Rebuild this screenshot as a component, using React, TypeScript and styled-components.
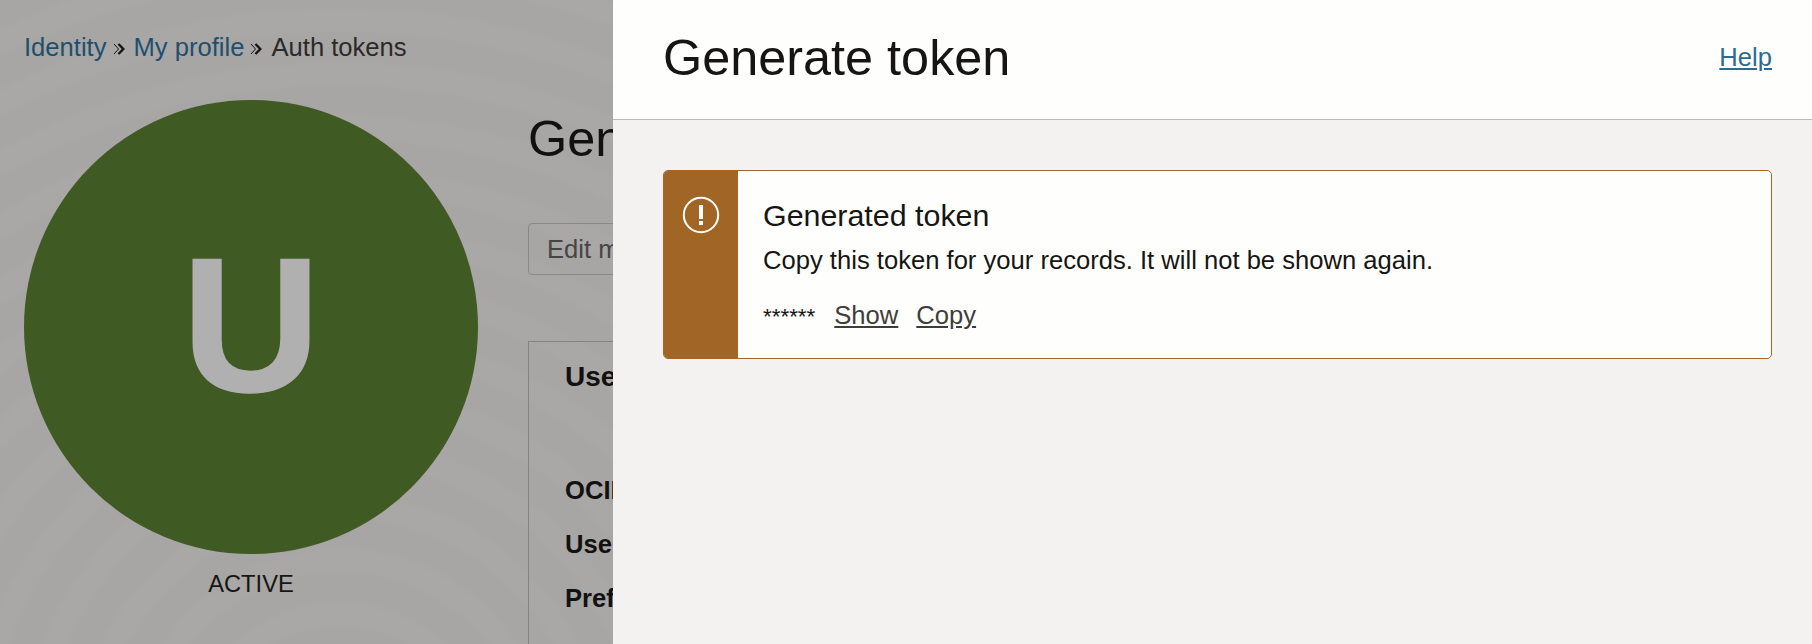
import styled, { createGlobalStyle } from 'styled-components';

const GlobalStyle = createGlobalStyle`
  html, body {
    margin: 0;
    height: 100%;
    overflow: hidden;
    font-family: "Liberation Sans", Arial, sans-serif;
    color: #161513;
  }
`;

const profileRows = ['OCID', 'User name', 'Preferred language'];

const CrumbChevrons = () => (
  <CrumbSep width="12" height="12" viewBox="0 0 12 12" fill="none" stroke="#161513">
    <path d="M1 1 L5.5 6 L1 11" strokeWidth="1" />
    <path d="M5.5 1 L10.3 6 L5.5 11" strokeWidth="2.4" />
  </CrumbSep>
);

export default function App() {
  return (
    <>
      <GlobalStyle />
      <Page>
        <Breadcrumbs>
          <CrumbLink>Identity</CrumbLink>
          <CrumbChevrons />
          <CrumbLink>My profile</CrumbLink>
          <CrumbChevrons />
          <CrumbCurrent>Auth tokens</CrumbCurrent>
        </Breadcrumbs>
        <Columns>
          <AvatarColumn>
            <Avatar>
              <AvatarLetter>U</AvatarLetter>
            </Avatar>
            <AvatarStatus>ACTIVE</AvatarStatus>
          </AvatarColumn>
          <Content>
            <PageTitle>Generate token</PageTitle>
            <EditButton>Edit my profile</EditButton>
            <InfoCard>
              <InfoTitle>User information</InfoTitle>
              <InfoRows>
                {profileRows.map((row) => (
                  <InfoRow key={row}>{row}</InfoRow>
                ))}
              </InfoRows>
            </InfoCard>
          </Content>
        </Columns>
      </Page>
      <Panel>
        <PanelHeader>
          <PanelTitle>Generate token</PanelTitle>
          <HelpLink>Help</HelpLink>
        </PanelHeader>
        <PanelBody>
          <Alert>
            <AlertStrip>
              <svg width="38" height="38" viewBox="0 0 38 38" fill="none">
                <circle cx="19" cy="19" r="17.2" stroke="#fff" strokeWidth="2" />
                <rect x="17" y="9" width="4" height="14" fill="#fff" />
                <rect x="17" y="25" width="4" height="4" fill="#fff" />
              </svg>
            </AlertStrip>
            <AlertContent>
              <AlertTitle>Generated token</AlertTitle>
              <AlertText>Copy this token for your records. It will not be shown again.</AlertText>
              <TokenRow>
                <TokenMask>******</TokenMask>
                <TokenAction>Show</TokenAction>
                <TokenAction>Copy</TokenAction>
              </TokenRow>
            </AlertContent>
          </Alert>
        </PanelBody>
      </Panel>
    </>
  );
}

const Page = styled.div`
  width: 1812px;
  height: 644px;
  box-sizing: border-box;
  padding: 32px 0 0 24px;
  overflow: hidden;
  background:
    repeating-radial-gradient(circle at 340px 760px, rgba(0, 0, 0, 0.006) 0 22px, rgba(255, 255, 255, 0.006) 30px 46px, rgba(0, 0, 0, 0.006) 54px),
    #a8a7a6;
  white-space: nowrap;
`;

const Breadcrumbs = styled.div`
  display: flex;
  align-items: center;
  height: 30px;
  font-size: 25.6px;
  color: #2b2a28;
`;

const CrumbLink = styled.span`
  color: #1f4f6d;
`;

const CrumbSep = styled.svg`
  flex-shrink: 0;
  margin: 3px 9px 0 6px;
`;

const CrumbCurrent = styled.span``;

const Columns = styled.div`
  display: flex;
  margin-top: 38px;
`;

const AvatarColumn = styled.div`
  display: flex;
  flex-direction: column;
  align-items: center;
  width: 454px;
  flex-shrink: 0;
`;

const Avatar = styled.div`
  display: flex;
  align-items: center;
  justify-content: center;
  width: 454px;
  height: 454px;
  border-radius: 50%;
  background: #405a24;
`;

const AvatarLetter = styled.span`
  margin-top: -5px;
  color: #b0b0b0;
  font-size: 192px;
  font-weight: 700;
  -webkit-text-stroke: 1.5px #b0b0b0;
`;

const AvatarStatus = styled.div`
  margin-top: 15px;
  font-size: 23.7px;
  line-height: 30px;
  color: #161513;
`;

const Content = styled.div`
  margin-left: 50px;
`;

const PageTitle = styled.h1`
  margin: 9px 0 0;
  font-size: 50.4px;
  font-weight: 400;
  line-height: 60px;
  color: #121110;
`;

const EditButton = styled.div`
  display: flex;
  align-items: center;
  box-sizing: border-box;
  width: 200px;
  height: 52px;
  margin-top: 54px;
  padding: 0 18px;
  border: 1px solid #8a8988;
  border-radius: 4px;
  font-size: 25.6px;
  color: #474543;
`;

const InfoCard = styled.div`
  width: 900px;
  height: 400px;
  box-sizing: border-box;
  margin-top: 66px;
  padding: 19px 36px;
  border: 1px solid #858483;
`;

const InfoTitle = styled.div`
  font-size: 28px;
  font-weight: 700;
  line-height: 32px;
  color: #121110;
`;

const InfoRows = styled.div`
  display: flex;
  flex-direction: column;
  gap: 24px;
  margin-top: 82px;
`;

const InfoRow = styled.div`
  font-size: 25.6px;
  font-weight: 700;
  line-height: 30px;
  color: #121110;
`;

const Panel = styled.div`
  position: fixed;
  top: 0;
  right: 0;
  bottom: 0;
  width: 1199px;
  display: flex;
  flex-direction: column;
  background: #f3f2f1;
`;

const PanelHeader = styled.div`
  display: flex;
  align-items: center;
  justify-content: space-between;
  box-sizing: border-box;
  height: 120px;
  padding: 0 40px 5px 50px;
  background: #fefefd;
  border-bottom: 1px solid #bcb9b6;
`;

const PanelTitle = styled.h2`
  margin: 0;
  font-size: 50.4px;
  font-weight: 400;
  color: #161513;
`;

const HelpLink = styled.a`
  font-size: 25.6px;
  color: #2c6c94;
  text-decoration: underline;
`;

const PanelBody = styled.div`
  padding: 50px 40px 0 50px;
`;

const Alert = styled.div`
  display: flex;
  box-sizing: border-box;
  height: 189px;
  border: 1px solid #a36628;
  border-radius: 5px;
  overflow: hidden;
  background: #fefefd;
`;

const AlertStrip = styled.div`
  display: flex;
  justify-content: center;
  flex-shrink: 0;
  width: 74px;
  padding-top: 25px;
  background: #a16626;
`;

const AlertContent = styled.div`
  padding: 26px 25px 0;
`;

const AlertTitle = styled.div`
  font-size: 30.4px;
  line-height: 36px;
`;

const AlertText = styled.div`
  margin-top: 12px;
  font-size: 25.6px;
  line-height: 30px;
`;

const TokenRow = styled.div`
  display: flex;
  align-items: baseline;
  gap: 18px;
  margin-top: 25px;
  font-size: 25.6px;
  line-height: 30px;
`;

const TokenMask = styled.span`
  margin-right: 1px;
  font-size: 22.4px;
`;

const TokenAction = styled.a`
  color: #3f3d3b;
  text-decoration: underline;
`;
